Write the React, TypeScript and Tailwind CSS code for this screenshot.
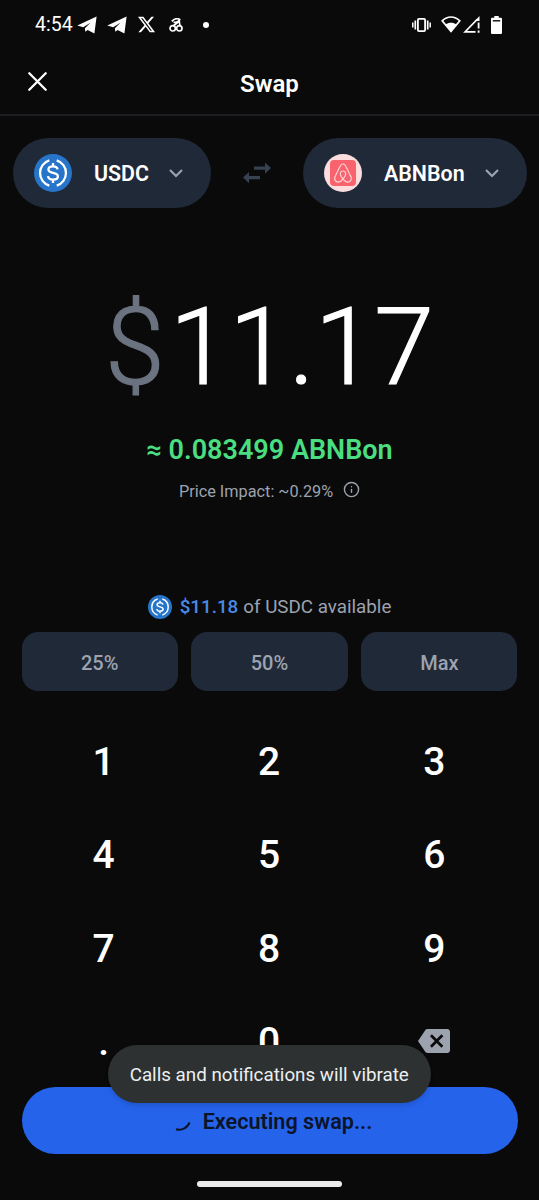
import { FaAirbnb, FaXTwitter } from "react-icons/fa6";
import { FiInfo } from "react-icons/fi";
import { MdBackspace } from "react-icons/md";

interface TokenProps {
  name: string;
  icon: React.ReactNode;
  className: string;
}

const Telegram = () => (
  <svg viewBox="0 0 20 18" className="w-5 h-[18px]" fill="#fff">
    <path d="M.3 9.6 19.6.5 17.4 17.4 10.6 14 8.3 15.8 7.9 12.3 13.4 6.8 6.2 11.3Z" />
  </svg>
);

const Cherry = () => (
  <svg
    viewBox="0 0 14 14"
    className="w-[14px] h-[14px]"
    fill="none"
    stroke="#fff"
    strokeWidth="1.7"
  >
    <path d="M2.8 3.4C5.2.8 8.2.2 10.7 1.4 9.7 4 7.4 4.9 4.6 4.1M10.5 1.4C9.3 5 6 6.2 4 8.2M10.5 1.4c-.6 3 .2 5 .7 6.8" />
    <circle cx="3.7" cy="10.3" r="2.7" />
    <circle cx="10.3" cy="10.3" r="2.7" />
  </svg>
);

const Usdc = ({ className }: { className: string }) => (
  <svg viewBox="0 0 38 38" className={className} fill="none">
    <circle cx="19" cy="19" r="19" fill="#2775ca" />
    <g stroke="#fff" strokeWidth="2.3">
      <path d="M15.3 6.4a13.2 13.2 0 0 0 0 25.2M22.7 6.4a13.2 13.2 0 0 1 0 25.2" />
      <path d="M23.6 15.4c-.3-2-2-3.1-4.6-3.1-2.7 0-4.6 1.3-4.6 3.3 0 4.6 9.5 1.9 9.5 6.7 0 2.1-1.9 3.4-4.9 3.4-2.8 0-4.7-1.3-5-3.5M19 9v3.4M19 25.6V29" />
    </g>
  </svg>
);

const Airbnb = () => (
  <div className="w-[38px] h-[38px] rounded-full bg-[#fbdde0] flex items-center justify-center">
    <div className="w-[26px] h-[26px] rounded-[4px] bg-[#f8636d] flex items-center justify-center">
      <FaAirbnb className="w-[22px] h-[22px] text-[#fbd3d6]" />
    </div>
  </div>
);

const Token = ({ name, icon, className }: TokenProps) => (
  <button
    className={`h-[70px] rounded-full bg-[#1f2937] flex items-center pl-[21px] ${className}`}
  >
    {icon}
    <span className="ml-[22px] pt-[2px] text-[21.4px] font-semibold text-white">
      {name}
    </span>
    <svg
      viewBox="0 0 14 9"
      className="ml-5 w-[14px] h-[9px]"
      fill="none"
      stroke="#9ca3af"
      strokeWidth="2.2"
    >
      <path d="m1 1 6 6 6-6" />
    </svg>
  </button>
);

const StatusBar = () => (
  <div className="h-[49px] flex items-center pl-[35px] pr-[37px]">
    <span className="text-[19.5px] w-[38px]">4:54</span>
    <div className="ml-1 flex items-center">
      <Telegram />
      <div className="ml-[10px]">
        <Telegram />
      </div>
      <FaXTwitter className="ml-[10px] w-[19px] h-[19px]" />
      <div className="ml-[13px]">
        <Cherry />
      </div>
      <div className="ml-5 w-[6px] h-[6px] rounded-full bg-white" />
    </div>
    <div className="ml-auto flex items-center">
      <svg viewBox="0 0 19 16" className="w-[19px] h-4" fill="none" stroke="#fff">
        <rect x="5.9" y="1.9" width="7.2" height="12.2" rx="1" strokeWidth="1.8" />
        <path d="M3.3 3.5v9M15.7 3.5v9" strokeWidth="1.7" />
        <path d="M.8 5.5v5M18.2 5.5v5" strokeWidth="1.5" />
      </svg>
      <svg viewBox="0 0 20 17" className="ml-[10px] w-5 h-[17px]">
        <path
          d="M1.2 4.8C6.5-.3 13.5-.3 18.8 4.8L10 15.5Z"
          fill="none"
          stroke="#fff"
          strokeWidth="1.7"
        />
        <path d="M4.6 8.6C7.5 6 12.5 6 15.4 8.6L10 16Z" fill="#fff" />
      </svg>
      <svg viewBox="0 0 17 17" className="ml-[2px] w-[17px] h-[17px]">
        <path
          d="M12.5 15.9H2L14.2 3.4"
          fill="none"
          stroke="#fff"
          strokeWidth="1.6"
        />
        <path d="M16.5 0v5h-4.6ZM14.7 6.5h1.8v6h-1.8ZM14.7 14.5h1.8v2.2h-1.8Z" fill="#fff" />
      </svg>
      <svg viewBox="0 0 11 18" className="ml-[11px] w-[11px] h-[18px]">
        <path
          d="M3.3 0h4.4v1.7H10a1 1 0 0 1 1 1V17a1 1 0 0 1-1 1H1a1 1 0 0 1-1-1V2.7a1 1 0 0 1 1-1h2.3Z"
          fill="#fff"
        />
        <path d="M1.8 4.8h7.4" stroke="#0a0a0a" strokeWidth="1.4" />
      </svg>
    </div>
  </div>
);

const keys = ["1", "2", "3", "4", "5", "6", "7", "8", "9", ".", "0"];

const App = () => {
  return (
    <div className="relative w-[539px] h-[1200px] overflow-hidden bg-[#0a0a0a] text-white font-['Roboto',sans-serif]">
      <StatusBar />
      <div className="h-[67px] border-b-2 border-[#1c1d21] grid grid-cols-[1fr_auto_1fr] items-center">
        <svg
          viewBox="0 0 19 19"
          className="ml-7 w-[19px] h-[19px]"
          stroke="#fff"
          strokeWidth="2.3"
          strokeLinecap="round"
        >
          <path d="m1.3 1.3 16.4 16.4M17.7 1.3 1.3 17.7" />
        </svg>
        <h1 className="text-[24px] font-semibold pt-1">Swap</h1>
      </div>

      <div className="mt-[22px] flex items-center pl-[13px] pr-3 justify-between">
        <Token
          name="USDC"
          icon={<Usdc className="w-[38px] h-[38px]" />}
          className="w-[198px]"
        />
        <svg viewBox="0 0 28 22" className="w-7 h-[22px]" fill="#374151">
          <path d="M11 4.4h11V.5l6 5.6-6 5.6V7.7H11ZM17 13.9H6V10l-6 5.6 6 5.6v-4h11Z" />
        </svg>
        <Token name="ABNBon" icon={<Airbnb />} className="w-[224px]" />
      </div>

      <div className="mt-[76px] flex flex-col items-center">
        <div className="h-[126px] leading-[126px] text-[107.5px] font-light whitespace-nowrap [-webkit-text-stroke-width:1.2px]">
          <span className="mr-[5px] text-[#6b7280]">$</span>
          <span>11.17</span>
        </div>
        <div className="mt-[23.5px] h-8 leading-8 text-[27px] font-semibold text-[#4ade80]">
          ≈ 0.083499 ABNBon
        </div>
        <div className="mt-[16.5px] h-5 flex items-center text-[16.3px] text-[#9ca3af]">
          Price Impact: ~0.29%
          <FiInfo className="ml-[10px] mb-[5px] w-[17px] h-[17px]" />
        </div>
      </div>

      <div className="mt-[93px] h-6 flex items-center justify-center text-[18.8px] text-[#9ca3af]">
        <Usdc className="w-6 h-6 mr-2 mb-px" />
        <span className="mr-[5px] font-medium text-[#4c8ae8]">$11.18</span>
        of USDC available
      </div>

      <div className="mt-[13px] px-[21.5px] grid grid-cols-3 gap-[13.5px]">
        {["25%", "50%", "Max"].map((label) => (
          <button
            key={label}
            className="h-[59px] rounded-2xl bg-[#1f2937] pt-[3px] text-[20px] font-medium text-[#9ca3af]"
          >
            {label}
          </button>
        ))}
      </div>

      <div className="mt-6 pl-[21px] pr-[22px] grid grid-cols-3 auto-rows-[93.6px] text-[39px] font-medium">
        {keys.map((key) => (
          <button key={key} className="flex items-center justify-center">
            {key}
          </button>
        ))}
        <button className="flex items-center justify-center">
          <MdBackspace className="mb-1 w-8 h-8 text-[#9ca3af]" />
        </button>
      </div>

      <div className="absolute left-[21.5px] top-[1086.5px] w-[496px] h-[67.5px] rounded-full bg-[#2563eb] pt-[3px] pl-2 flex items-center justify-center text-[21.6px] font-semibold text-[#0b1428]">
        <svg
          viewBox="0 0 16 10"
          className="w-4 h-[10px] mt-2 mr-3"
          fill="none"
          stroke="#0b1428"
          strokeWidth="2"
        >
          <path d="M1 8.2C6.5 9.8 12 7.5 14.6 1.5" />
        </svg>
        Executing swap...
      </div>

      <div className="absolute left-[108px] top-[1044.5px] w-[322.5px] h-[58.5px] rounded-full bg-[#2d3132] shadow-md pt-[3px] flex items-center justify-center text-[18.8px] text-[#eceff0] whitespace-nowrap">
        Calls and notifications will vibrate
      </div>

      <div className="absolute left-[197px] top-[1181px] w-[145px] h-[5.5px] rounded-full bg-[#ececec]" />
    </div>
  );
};
export default App;
